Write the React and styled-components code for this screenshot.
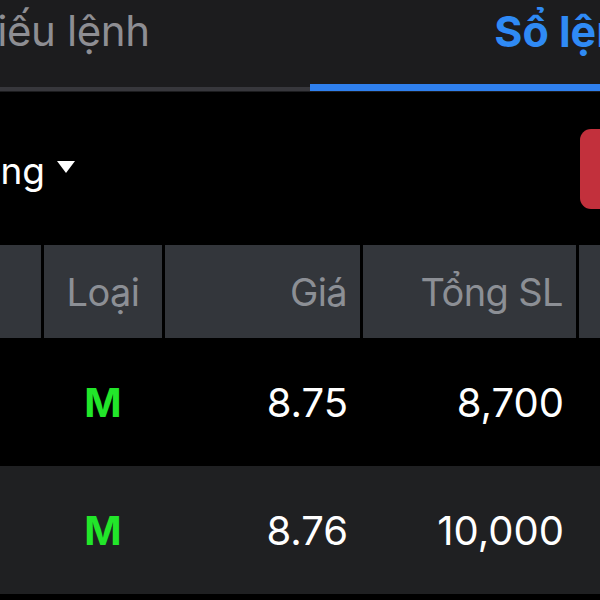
import React from "react";
import styled, { createGlobalStyle } from "styled-components";

const GlobalStyle = createGlobalStyle`
  html, body {
    margin: 0;
    padding: 0;
    background: #000;
    overflow: hidden;
  }
  body {
    font-family: Inter, "Noto Sans", "Liberation Sans", sans-serif;
    -webkit-font-smoothing: antialiased;
  }
`;

const Screen = styled.div`
  width: 600px;
  height: 600px;
  overflow: hidden;
  background: #000;
  display: flex;
  flex-direction: column;
`;

const TabBar = styled.div`
  display: flex;
  background: #1c1c1e;
  margin-left: -214px;
  flex-shrink: 0;
`;

const Tab = styled.div`
  width: 524px;
  height: 92px;
  flex-shrink: 0;
  display: flex;
  flex-direction: column;
  justify-content: space-between;
  align-items: center;
`;

const TabLabel = styled.span`
  padding-top: 10px;
  font-size: ${(p) => (p.$active ? "43px" : "42px")};
  line-height: 1;
  white-space: nowrap;
  font-weight: ${(p) => (p.$active ? 700 : 400)};
  color: ${(p) => (p.$active ? "#2f8af5" : "#8e8e93")};
  letter-spacing: ${(p) => (p.$active ? "0" : "-0.4px")};
`;

const TabIndicator = styled.div`
  align-self: stretch;
  height: ${(p) => (p.$active ? "7px" : "4px")};
  background: ${(p) => (p.$active ? "#2f80ee" : "#37373c")};
  margin-bottom: 1px;
`;

const FilterBar = styled.div`
  height: 153px;
  flex-shrink: 0;
  display: flex;
  align-items: center;
  justify-content: space-between;
`;

const Dropdown = styled.div`
  width: 300px;
  margin-left: -225px;
  display: flex;
  justify-content: flex-end;
  align-items: center;
  gap: 12px;
  padding-top: 3px;
`;

const DropdownLabel = styled.span`
  font-size: 37px;
  line-height: 1;
  color: #fff;
  white-space: nowrap;
`;

const Caret = styled.svg`
  width: 18px;
  height: 12px;
  flex-shrink: 0;
  margin-top: -6px;
`;

const ActionButton = styled.button`
  width: 120px;
  height: 80px;
  margin-right: -100px;
  flex-shrink: 0;
  border: none;
  border-radius: 11px;
  background: #c2303c;
`;

const Grid = styled.div`
  display: grid;
  grid-template-columns: 141px 118px 195px 213px 150px;
  column-gap: 3px;
  margin-left: -100px;
  flex-shrink: 0;
`;

const HeaderRow = styled(Grid)`
  height: 93px;
`;

const HeaderCell = styled.div`
  background: #33363b;
  display: flex;
  align-items: center;
  justify-content: ${(p) => (p.$align === "right" ? "flex-end" : "center")};
  padding-right: ${(p) => (p.$align === "right" ? "13px" : "0")};
  font-size: 38px;
  letter-spacing: -0.6px;
  color: #8c8f95;
  white-space: nowrap;
`;

const DataRow = styled(Grid)`
  height: 128px;
  background: ${(p) => (p.$striped ? "#1f2022" : "#000")};
`;

const DataCell = styled.div`
  display: flex;
  align-items: center;
  justify-content: ${(p) => (p.$align === "right" ? "flex-end" : "center")};
  padding-right: ${(p) => (p.$align === "right" ? "12px" : "0")};
  font-size: 40px;
  color: #fff;
  white-space: nowrap;
`;

const TypeBadge = styled.span`
  font-weight: 700;
  color: #22e62a;
`;

const rows = [
  { type: "M", price: "8.75", qty: "8,700" },
  { type: "M", price: "8.76", qty: "10,000" },
  { type: "M", price: "8.77", qty: "5,000" },
];

export default function App() {
  return (
    <>
      <GlobalStyle />
      <Screen>
        <TabBar>
          <Tab>
            <TabLabel>Phiếu lệnh</TabLabel>
            <TabIndicator />
          </Tab>
          <Tab>
            <TabLabel $active>Sổ lệnh</TabLabel>
            <TabIndicator $active />
          </Tab>
        </TabBar>

        <FilterBar>
          <Dropdown>
            <DropdownLabel>Tất cả trạng thái hoạt động</DropdownLabel>
            <Caret viewBox="0 0 18 12">
              <path d="M0 0 H18 L9 12 Z" fill="#fff" />
            </Caret>
          </Dropdown>
          <ActionButton aria-label="Hủy tất cả" />
        </FilterBar>

        <HeaderRow>
          <HeaderCell />
          <HeaderCell>Loại</HeaderCell>
          <HeaderCell $align="right">Giá</HeaderCell>
          <HeaderCell $align="right">Tổng SL</HeaderCell>
          <HeaderCell />
        </HeaderRow>

        {rows.map((r, i) => (
          <DataRow key={i} $striped={i % 2 === 1}>
            <DataCell />
            <DataCell>
              <TypeBadge>{r.type}</TypeBadge>
            </DataCell>
            <DataCell $align="right">{r.price}</DataCell>
            <DataCell $align="right">{r.qty}</DataCell>
            <DataCell />
          </DataRow>
        ))}
      </Screen>
    </>
  );
}
